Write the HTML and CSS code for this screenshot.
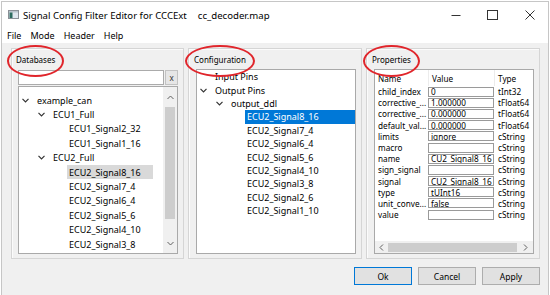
FILE: index.html
```html
<!DOCTYPE html>
<html lang="en">
<head>
<meta charset="utf-8">
<title>Signal Config Filter Editor</title>
<link rel="stylesheet" href="styles.css">
</head>
<body>
<div class="window">
  <div class="titlebar">
    <svg class="app-icon" width="11" height="9" viewBox="0 0 11 9">
      <rect x="0.5" y="0.5" width="10" height="8" fill="#dfe6ee" stroke="#8a8f96"/>
      <rect x="1" y="1" width="9" height="1.5" fill="#b9c3cc"/>
      <rect x="1.5" y="2.5" width="3" height="5.5" fill="#2d6b5f"/>
    </svg>
    <span class="title">Signal Config Filter Editor for CCCExt</span>
    <span class="title-file">cc_decoder.map</span>
    <div class="controls">
      <span class="ctl"><svg width="10" height="10" viewBox="0 0 10 10"><line x1="0.5" y1="5.5" x2="9.5" y2="5.5" stroke="#333" stroke-width="1"/></svg></span>
      <span class="ctl"><svg width="11" height="10" viewBox="0 0 11 10"><rect x="0.5" y="0.5" width="10" height="9" fill="none" stroke="#333" stroke-width="1"/></svg></span>
      <span class="ctl"><svg width="10" height="10" viewBox="0 0 10 10"><path d="M0.5 0.5 L9.5 9.5 M9.5 0.5 L0.5 9.5" stroke="#333" stroke-width="1"/></svg></span>
    </div>
  </div>
  <div class="menubar">
    <span>File</span><span>Mode</span><span>Header</span><span>Help</span>
  </div>

  <div class="main">
    <section class="group group-db">
      <div class="group-title"><span class="annot">Databases</span></div>
      <div class="filter-row">
        <div class="filter"></div>
        <div class="clear-btn">x</div>
      </div>
      <div class="tree tree-db">
        <div class="rows">
          <div class="row"><span class="branch"><svg width="7" height="5" viewBox="0 0 7 5"><polyline points="0.5,0.8 3.5,3.8 6.5,0.8" fill="none" stroke="#333" stroke-width="1.2"/></svg></span><span class="label">example_can</span></div>
          <div class="row l1"><span class="branch"><svg width="7" height="5" viewBox="0 0 7 5"><polyline points="0.5,0.8 3.5,3.8 6.5,0.8" fill="none" stroke="#333" stroke-width="1.2"/></svg></span><span class="label">ECU1_Full</span></div>
          <div class="row l2"><span class="branch"></span><span class="label">ECU1_Signal2_32</span></div>
          <div class="row l2"><span class="branch"></span><span class="label">ECU1_Signal1_16</span></div>
          <div class="row l1"><span class="branch"><svg width="7" height="5" viewBox="0 0 7 5"><polyline points="0.5,0.8 3.5,3.8 6.5,0.8" fill="none" stroke="#333" stroke-width="1.2"/></svg></span><span class="label">ECU2_Full</span></div>
          <div class="row l2"><span class="branch"></span><span class="label sel-gray">ECU2_Signal8_16</span></div>
          <div class="row l2"><span class="branch"></span><span class="label">ECU2_Signal7_4</span></div>
          <div class="row l2"><span class="branch"></span><span class="label">ECU2_Signal6_4</span></div>
          <div class="row l2"><span class="branch"></span><span class="label">ECU2_Signal5_6</span></div>
          <div class="row l2"><span class="branch"></span><span class="label">ECU2_Signal4_10</span></div>
          <div class="row l2"><span class="branch"></span><span class="label">ECU2_Signal3_8</span></div>
        </div>
        <div class="vscroll">
          <div class="arrow"><svg width="7" height="5" viewBox="0 0 7 5"><polyline points="0.5,4 3.5,1 6.5,4" fill="none" stroke="#606060" stroke-width="1"/></svg></div>
          <div class="track"><div class="thumb"></div></div>
          <div class="arrow"><svg width="7" height="5" viewBox="0 0 7 5"><polyline points="0.5,1 3.5,4 6.5,1" fill="none" stroke="#606060" stroke-width="1"/></svg></div>
        </div>
      </div>
    </section>

    <section class="group group-cfg">
      <div class="group-title"><span class="annot">Configuration</span></div>
      <div class="tree tree-cfg">
        <div class="rows">
          <div class="row"><span class="branch"></span><span class="label">Input Pins</span></div>
          <div class="row"><span class="branch"><svg width="7" height="5" viewBox="0 0 7 5"><polyline points="0.5,0.8 3.5,3.8 6.5,0.8" fill="none" stroke="#333" stroke-width="1.2"/></svg></span><span class="label">Output Pins</span></div>
          <div class="row l1"><span class="branch"><svg width="7" height="5" viewBox="0 0 7 5"><polyline points="0.5,0.8 3.5,3.8 6.5,0.8" fill="none" stroke="#333" stroke-width="1.2"/></svg></span><span class="label">output_ddl</span></div>
          <div class="row l2"><span class="branch"></span><span class="label sel-blue">ECU2_Signal8_16</span></div>
          <div class="row l2"><span class="branch"></span><span class="label">ECU2_Signal7_4</span></div>
          <div class="row l2"><span class="branch"></span><span class="label">ECU2_Signal6_4</span></div>
          <div class="row l2"><span class="branch"></span><span class="label">ECU2_Signal5_6</span></div>
          <div class="row l2"><span class="branch"></span><span class="label">ECU2_Signal4_10</span></div>
          <div class="row l2"><span class="branch"></span><span class="label">ECU2_Signal3_8</span></div>
          <div class="row l2"><span class="branch"></span><span class="label">ECU2_Signal2_6</span></div>
          <div class="row l2"><span class="branch"></span><span class="label">ECU2_Signal1_10</span></div>
        </div>
      </div>
    </section>

    <section class="group group-props">
      <div class="group-title"><span class="annot">Properties</span></div>
      <div class="table">
        <div class="thead">
          <span class="c-name">Name</span><span class="c-value">Value</span><span class="c-type">Type</span>
        </div>
        <div class="tbody">
          <div class="trow"><span class="c-name">child_index</span><span class="c-value"><span class="edit">0</span></span><span class="c-type">tInt32</span></div>
          <div class="trow"><span class="c-name">corrective_...</span><span class="c-value"><span class="edit">1.000000</span></span><span class="c-type">tFloat64</span></div>
          <div class="trow"><span class="c-name">corrective_...</span><span class="c-value"><span class="edit">0.000000</span></span><span class="c-type">tFloat64</span></div>
          <div class="trow"><span class="c-name">default_val...</span><span class="c-value"><span class="edit">0.000000</span></span><span class="c-type">tFloat64</span></div>
          <div class="trow"><span class="c-name">limits</span><span class="c-value"><span class="edit">ignore</span></span><span class="c-type">cString</span></div>
          <div class="trow"><span class="c-name">macro</span><span class="c-value"><span class="edit"></span></span><span class="c-type">cString</span></div>
          <div class="trow"><span class="c-name">name</span><span class="c-value"><span class="edit">CU2_Signal8_16</span></span><span class="c-type">cString</span></div>
          <div class="trow"><span class="c-name">sign_signal</span><span class="c-value"><span class="edit"></span></span><span class="c-type">cString</span></div>
          <div class="trow"><span class="c-name">signal</span><span class="c-value"><span class="edit">CU2_Signal8_16</span></span><span class="c-type">cString</span></div>
          <div class="trow"><span class="c-name">type</span><span class="c-value"><span class="edit">tUInt16</span></span><span class="c-type">cString</span></div>
          <div class="trow"><span class="c-name">unit_conve...</span><span class="c-value"><span class="edit">false</span></span><span class="c-type">cString</span></div>
          <div class="trow"><span class="c-name">value</span><span class="c-value"><span class="edit"></span></span><span class="c-type">cString</span></div>
        </div>
        <div class="hscroll">
          <div class="harrow"><svg width="5" height="7" viewBox="0 0 5 7"><polyline points="4,0.5 1,3.5 4,6.5" fill="none" stroke="#606060" stroke-width="1"/></svg></div>
          <div class="htrack"><div class="hthumb"></div></div>
          <div class="harrow"><svg width="5" height="7" viewBox="0 0 5 7"><polyline points="1,0.5 4,3.5 1,6.5" fill="none" stroke="#606060" stroke-width="1"/></svg></div>
        </div>
      </div>
    </section>
  </div>

  <div class="buttons">
    <button class="btn btn-default" type="button">Ok</button>
    <button class="btn" type="button">Cancel</button>
    <button class="btn" type="button">Apply</button>
  </div>
</div>
</body>
</html>
```

FILE: styles.css
```css
* { box-sizing: border-box; }
html, body { margin: 0; padding: 0; }
body {
  width: 550px;
  height: 295px;
  overflow: hidden;
  background: #ffffff;
  font-family: "Noto Sans", "Segoe UI", sans-serif;
  color: #000;
}
.window {
  margin: 1px 1px 0 1px;
  height: 294px;
  border: 1px solid #c6c6c6;
  border-bottom: none;
  background: #f0f0f0;
  display: flex;
  flex-direction: column;
}

/* title bar */
.titlebar {
  height: 25px;
  background: #fff;
  display: flex;
  align-items: center;
  padding-left: 6px;
  padding-top: 1px;
  font-size: 9.6px;
  flex-shrink: 0;
}
.app-icon { margin-right: 4px; margin-top: -1px; }
.title-file { margin-left: 11px; }
.controls { margin-left: auto; display: flex; height: 100%; }
.ctl {
  width: 37px;
  display: flex;
  align-items: center;
  justify-content: center;
}

/* menu */
.menubar {
  height: 16px;
  background: #fff;
  display: flex;
  align-items: center;
  gap: 9px;
  padding-left: 5px;
  font-size: 9px;
  flex-shrink: 0;
}

/* main area */
.main {
  display: flex;
  gap: 4px;
  padding: 5px 8px 0 9px;
}
.group {
  height: 211px;
  border: 1px solid #d5d5d5;
  box-shadow: inset 1px 1px 0 #fbfbfb;
  display: flex;
  flex-direction: column;
  padding: 0 5px 4px 7px;
}
.group-db { width: 173px; padding-left: 6px; }
.group-cfg { width: 174px; }
.group-props { width: 174px; }
.group-title {
  height: 20px;
  display: flex;
  align-items: center;
  margin-left: -2px;
  font-size: 8px;
  flex-shrink: 0;
}
.annot { position: relative; }
.annot::after {
  content: "";
  position: absolute;
  left: -9px;
  right: -9px;
  top: 50%;
  height: 28px;
  margin-top: -14px;
  border: 2px solid #e0252b;
  border-radius: 50%;
}

/* filter */
.filter-row {
  display: flex;
  height: 15px;
  margin-top: 1px;
  margin-bottom: 1px;
  gap: 1px;
  flex-shrink: 0;
}
.filter {
  flex: 1;
  background: #fff;
  border: 1px solid #ababab;
}
.clear-btn {
  width: 13px;
  background: #e6e6e6;
  border: 1px solid #c2c2c2;
  font-size: 8px;
  color: #333;
  display: flex;
  align-items: center;
  justify-content: center;
}

/* trees */
.tree {
  flex: 1;
  background: #fff;
  border: 1px solid #a9a9a9;
  display: flex;
  font-size: 9px;
  overflow: hidden;
}
.rows { display: flex; flex-direction: column; }
.tree-db .rows { width: 134px; padding-top: 6px; }
.tree-cfg .rows { flex: 1; }
.row {
  display: flex;
  align-items: center;
  white-space: nowrap;
}
.tree-db .row { height: 14.4px; }
.tree-cfg .row { height: 13.4px; }
.row.l1 { padding-left: 16px; }
.row.l2 { padding-left: 32px; }
.branch {
  width: 16px;
  height: 100%;
  display: flex;
  align-items: center;
  padding-left: 3px;
  flex-shrink: 0;
}
.label {
  flex: 1;
  height: 100%;
  display: flex;
  align-items: center;
  padding-left: 2px;
}
.sel-gray { background: #d9d9d9; }
.sel-blue { background: #0078d7; color: #fff; }

.vscroll {
  margin-left: auto;
  width: 14px;
  background: #f0f0f0;
  display: flex;
  flex-direction: column;
}
.arrow {
  height: 20px;
  display: flex;
  align-items: center;
  justify-content: center;
}
.track { flex: 1; }
.thumb {
  height: 112px;
  margin: 0 2px;
  background: #cdcdcd;
}

/* properties table */
.table {
  flex: 1;
  background: #fff;
  border: 1px solid #a9a9a9;
  display: flex;
  flex-direction: column;
  font-size: 8.2px;
  overflow: hidden;
}
.thead {
  height: 16px;
  display: flex;
  align-items: center;
  flex-shrink: 0;
}
.thead > span { height: 100%; display: flex; align-items: center; }
.thead .c-value, .thead .c-type { border-left: 1px solid #ececec; }
.c-name { width: 53px; padding-left: 3px; white-space: nowrap; overflow: hidden; }
.c-value { width: 66px; }
.c-type { flex: 1; padding-left: 4px; white-space: nowrap; }
.thead .c-value { padding-left: 3px; }
.thead .c-type { padding-left: 3px; }
.tbody { flex: 1; }
.trow {
  height: 11.2px;
  display: flex;
  align-items: center;
}
.trow > span { height: 100%; display: flex; align-items: center; }
.edit {
  width: 100%;
  height: 10px;
  border: 1px solid #9a9a9a;
  background: #fff;
  padding-left: 2px;
  display: flex;
  align-items: center;
  white-space: nowrap;
  overflow: hidden;
}
.hscroll {
  height: 12px;
  background: #f0f0f0;
  display: flex;
  flex-shrink: 0;
}
.harrow {
  width: 13px;
  display: flex;
  align-items: center;
  justify-content: center;
}
.htrack { flex: 1; display: flex; align-items: center; }
.hthumb { width: 100%; height: 9px; background: #cdcdcd; }
.harrow:last-child { width: 16px; }

/* buttons */
.buttons {
  display: flex;
  justify-content: flex-end;
  gap: 6px;
  margin-top: 8px;
  padding-right: 8px;
}
.btn {
  width: 58px;
  height: 18px;
  padding: 0;
  background: #e1e1e1;
  border: 1px solid #adadad;
  font-family: "Noto Sans", "Segoe UI", sans-serif;
  font-size: 8.5px;
  color: #000;
}
.btn-default { border-color: #0078d7; }
```
